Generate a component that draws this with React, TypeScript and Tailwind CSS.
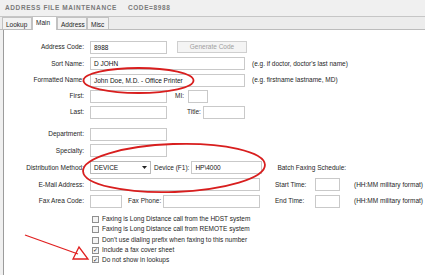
import type { ReactNode } from 'react'

// Plain text box used all over the form
const Field = ({
  className = '',
  value,
}: {
  className?: string
  value?: string
}) => (
  <div
    className={`h-[13px] shrink-0 border border-[#c9c9c9] bg-white px-[3px] leading-[11px] text-[#111] ${className}`}
  >
    {value}
  </div>
)

const Row = ({
  label,
  children,
  className = 'h-[16px]',
}: {
  label: string
  children?: ReactNode
  className?: string
}) => (
  <div className={`flex items-center ${className}`}>
    <div className="w-[80px] shrink-0 text-right">{label}</div>
    <div className="ml-[6px] flex items-center">{children}</div>
  </div>
)

const Check = ({
  label,
  checked = false,
  className = 'h-[10px]',
}: {
  label: string
  checked?: boolean
  className?: string
}) => (
  <div className={`flex items-center ${className}`}>
    <div className="flex h-[7px] w-[7px] shrink-0 items-center justify-center border border-[#8f8f8f] bg-[#f4f4f4] text-[6px] leading-none text-[#222]">
      {checked ? '✓' : ''}
    </div>
    <span className="ml-[3px]">{label}</span>
  </div>
)

const tabs = ['Lookup', 'Main', 'Address', 'Misc']
const tabWidths = ['w-[30px]', 'w-[25px]', 'w-[30px]', 'w-[22px]']

export default function App() {
  return (
    <div className="relative flex h-[275px] w-[425px] flex-col overflow-hidden bg-[#f0f0f0] font-[Liberation_Sans,Arial,sans-serif] text-[6.5px] text-[#1e1e1e]">
      {/* Title */}
      <div className="flex h-[16px] shrink-0 items-center pl-[5px] text-[6.5px] font-bold tracking-[0.6px] text-[#7a7a7a]">
        <span>ADDRESS FILE MAINTENANCE</span>
        <span className="ml-[11px]">CODE=8988</span>
      </div>

      {/* Tabs */}
      <div className="flex h-[14px] shrink-0 items-end border-t border-b border-t-[#c6c6c6] border-b-[#bcbcbc] bg-[#ececec] pl-[2px]">
        {tabs.map((t, i) => (
          <div
            key={t}
            className={`${tabWidths[i]} border border-b-0 border-[#c2c2c2] pl-[3px] ${
              t === 'Main'
                ? 'relative z-10 -mb-px h-[14px] bg-white pt-[1px]'
                : 'h-[12px] bg-[#f2f2f2] pt-[2px]'
            } leading-[9px]`}
          >
            {t}
          </div>
        ))}
      </div>

      {/* Form body */}
      <div className="ml-[3px] flex-1 border-l border-[#9c9c9c] bg-white pt-[9px]">
        <Row label="Address Code:">
          <Field className="w-[77px]" value="8988" />
          <div className="ml-[10px] flex h-[12px] w-[70px] items-center justify-center border border-[#cfcfcf] bg-[#f4f4f4] text-[#a0a0a0]">
            Generate Code
          </div>
        </Row>
        <Row label="Sort Name:" className="h-[17px]">
          <Field className="w-[155px]" value="D JOHN" />
          <span className="ml-[7px]">(e.g. if doctor, doctor's last name)</span>
        </Row>
        <Row label="Formatted Name:">
          <Field className="w-[155px]" value="John Doe, M.D. - Office Printer" />
          <span className="ml-[7px]">(e.g. firstname lastname, MD)</span>
        </Row>
        <Row label="First:">
          <Field className="w-[77px]" />
          <span className="ml-[8px] w-[13px]">MI:</span>
          <Field className="w-[20px]" />
        </Row>
        <Row label="Last:">
          <Field className="w-[77px]" />
          <span className="ml-[20px] whitespace-nowrap">Title:</span>
          <Field className="ml-[2px] w-[42px]" />
        </Row>

        <Row label="Department:" className="mt-[6px] h-[16px]">
          <Field className="w-[77px]" />
        </Row>
        <Row label="Specialty:" className="h-[17px]">
          <Field className="w-[77px]" />
        </Row>
        <Row label="Distribution Method:" className="h-[17px]">
          <div className="flex h-[13px] w-[61px] items-center justify-between border border-[#b9b9b9] bg-white pl-[3px] pr-[3px] text-[#111]">
            <span>DEVICE</span>
            <svg width="5" height="3" viewBox="0 0 5 3">
              <path d="M0 0h5L2.5 3z" fill="#222" />
            </svg>
          </div>
          <span className="ml-[3px] whitespace-nowrap">Device (F1):</span>
          <Field className="ml-[2px] w-[71px] border-[#7fa9d6]" value="HP\4000" />
          <span className="ml-[15px] whitespace-nowrap">Batch Faxing Schedule:</span>
        </Row>
        <Row label="E-Mail Address:" className="h-[17px]">
          <Field className="w-[170px]" />
          <span className="ml-[15px] w-[40px]">Start Time:</span>
          <Field className="w-[25px]" />
          <span className="ml-[14px] whitespace-nowrap">(HH:MM military format)</span>
        </Row>
        <Row label="Fax Area Code:">
          <Field className="w-[32px]" />
          <span className="ml-[6px] w-[35px]">Fax Phone:</span>
          <Field className="w-[97px]" />
          <span className="ml-[15px] w-[40px]">End Time:</span>
          <Field className="w-[25px]" />
          <span className="ml-[14px] whitespace-nowrap">(HH:MM military format)</span>
        </Row>

        <div className="mt-[5px] pl-[88px]">
          <Check label="Faxing is Long Distance call from the HDST system" />
          <Check label="Faxing is Long Distance call from REMOTE system" />
          <Check
            label="Don't use dialing prefix when faxing to this number"
            className="mt-[1px] h-[10px]"
          />
          <Check label="Include a fax cover sheet" checked />
          <Check label="Do not show in lookups" checked className="h-[9px]" />
        </div>
      </div>

      {/* Red annotations drawn over the form */}
      <svg
        className="pointer-events-none absolute left-0 top-0"
        width="425"
        height="275"
        viewBox="0 0 425 275"
      >
        <ellipse cx="138.5" cy="80.5" rx="55" ry="12.5" fill="none" stroke="#d81e1e" strokeWidth="1.8" />
        <ellipse
          cx="174"
          cy="168"
          rx="91"
          ry="24"
          fill="none"
          stroke="#d81e1e"
          strokeWidth="1.8"
          transform="rotate(-2 174 168)"
        />
        <line x1="25" y1="235" x2="78" y2="254" stroke="#e02020" strokeWidth="1.3" />
        <path d="M88 259 L73 259 L79 247 Z" fill="none" stroke="#e02020" strokeWidth="1.3" strokeLinejoin="miter" />
      </svg>
    </div>
  )
}
